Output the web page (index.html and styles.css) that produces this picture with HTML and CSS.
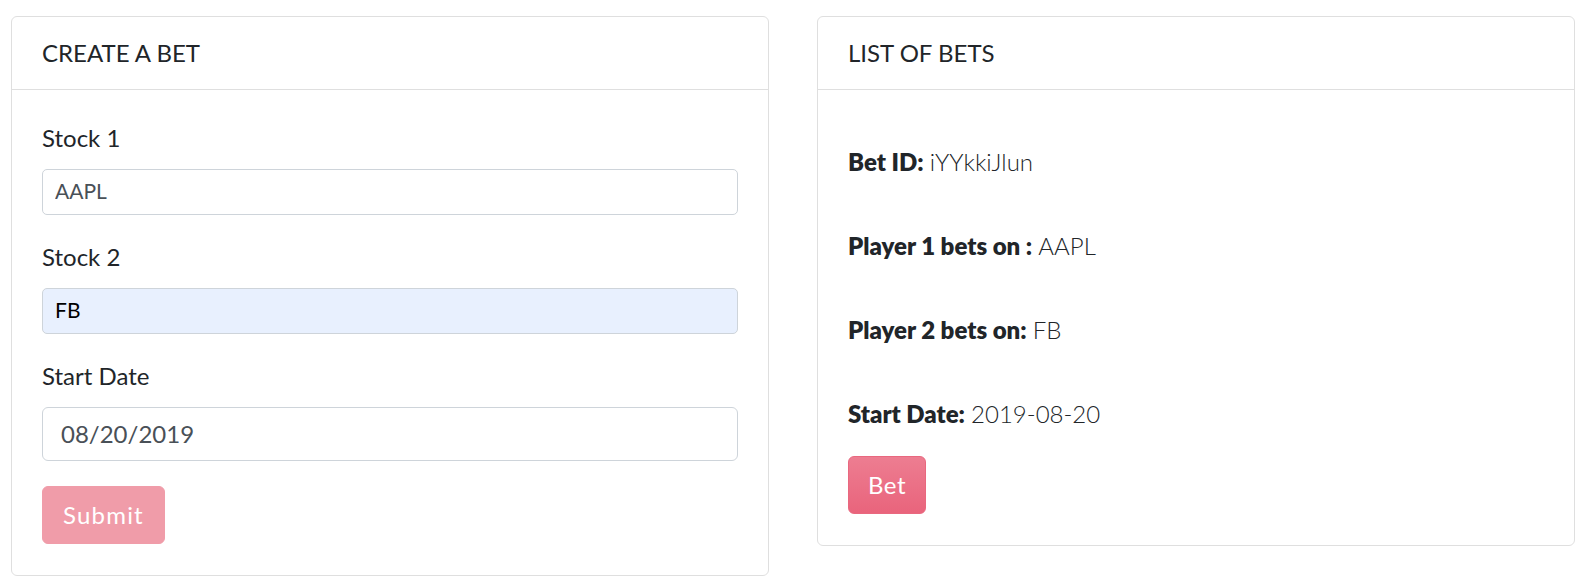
FILE: index.html
```html
<!DOCTYPE html>
<html lang="en">
<head>
<meta charset="utf-8">
<title>Bets</title>
<link rel="stylesheet" href="styles.css">
</head>
<body>
<main class="page">
  <section class="card card-create">
    <header class="card-header">CREATE A BET</header>
    <div class="card-body">
      <form class="bet-form">
        <div class="form-group">
          <label class="form-label" for="stock1">Stock 1</label>
          <input class="form-control form-control-sm" id="stock1" type="text" value="AAPL">
        </div>
        <div class="form-group">
          <label class="form-label" for="stock2">Stock 2</label>
          <input class="form-control form-control-sm is-autofilled" id="stock2" type="text" value="FB">
        </div>
        <div class="form-group">
          <label class="form-label" for="start">Start Date</label>
          <input class="form-control form-control-date" id="start" type="text" value="08/20/2019">
        </div>
        <button class="btn btn-submit" type="button" disabled>Submit</button>
      </form>
    </div>
  </section>

  <section class="card card-list">
    <header class="card-header">LIST OF BETS</header>
    <div class="card-body">
      <div class="bet-list">
        <p class="bet-line"><strong>Bet ID:</strong> <span class="val">iYYkkiJlun</span></p>
        <p class="bet-line"><strong>Player 1 bets on :</strong> <span class="val">AAPL</span></p>
        <p class="bet-line"><strong>Player 2 bets on:</strong> <span class="val">FB</span></p>
        <p class="bet-line"><strong>Start Date:</strong> <span class="val">2019-08-20</span></p>
      </div>
      <button class="btn btn-bet" type="button">Bet</button>
    </div>
  </section>
</main>
</body>
</html>
```

FILE: styles.css
```css
* {
  box-sizing: border-box;
}

html, body {
  margin: 0;
  padding: 0;
  background: #ffffff;
}

body {
  font-family: Lato, "Open Sans", "Liberation Sans", sans-serif;
  font-size: 24px;
  line-height: 36px;
  color: #212529;
}

.page {
  display: flex;
  align-items: flex-start;
  gap: 48px;
  padding: 16px 17px 0 11px;
}

.card {
  flex: 0 0 758px;
  display: flex;
  flex-direction: column;
  border: 1px solid #dfdfdf;
  border-radius: 6px;
  background: #fff;
}

.card-header {
  padding: 18px 30px;
  border-bottom: 1px solid #dfdfdf;
  font-size: 24px;
  line-height: 36px;
  font-weight: 400;
  color: #212529;
}

.card-body {
  padding: 30px 30px 31px;
}

.bet-form {
  display: flex;
  flex-direction: column;
  align-items: flex-start;
  margin: 0;
}

.form-group {
  display: flex;
  flex-direction: column;
  align-self: stretch;
  margin-bottom: 24px;
}

.form-label {
  font-size: 24px;
  line-height: 36px;
  margin-bottom: 13px;
  color: #212529;
}

.form-control {
  display: block;
  width: 100%;
  margin: 0;
  border: 1px solid #ced4da;
  background: #fff;
  color: #495057;
  font-family: Lato, "Open Sans", "Liberation Sans", sans-serif;
  outline: none;
}

.form-control-sm {
  height: 46px;
  padding: 4px 12px 8px;
  font-size: 21px;
  border-radius: 5px;
}

.is-autofilled {
  background: #e8f0fe;
  color: #000;
}

.form-control-date {
  height: 54px;
  padding: 8px 18px 10px;
  font-size: 24px;
  border-radius: 6px;
}

.btn {
  display: inline-block;
  padding: 10px 19px;
  border: 1px solid transparent;
  border-radius: 6px;
  font-family: Lato, "Open Sans", "Liberation Sans", sans-serif;
  font-size: 24px;
  line-height: 36px;
  font-weight: 400;
  color: #fff;
  cursor: pointer;
}

.btn-submit {
  margin-top: 1px;
  background: #f09ca9;
  border-color: #f09ca9;
  letter-spacing: 1.2px;
  padding: 10px 20px;
}

.btn-bet {
  margin-top: 24px;
  background: linear-gradient(to bottom, #ed7d91, #e9647c);
  border-color: #e9687f;
  letter-spacing: 0.5px;
}

.bet-list {
  display: flex;
  flex-direction: column;
  gap: 48px;
  padding-top: 24px;
}

.bet-line {
  margin: 0;
  font-size: 24px;
  line-height: 36px;
}

.bet-line strong {
  font-weight: 800;
  color: #212529;
}

.bet-line .val {
  font-weight: 300;
  color: #212529;
}
```
